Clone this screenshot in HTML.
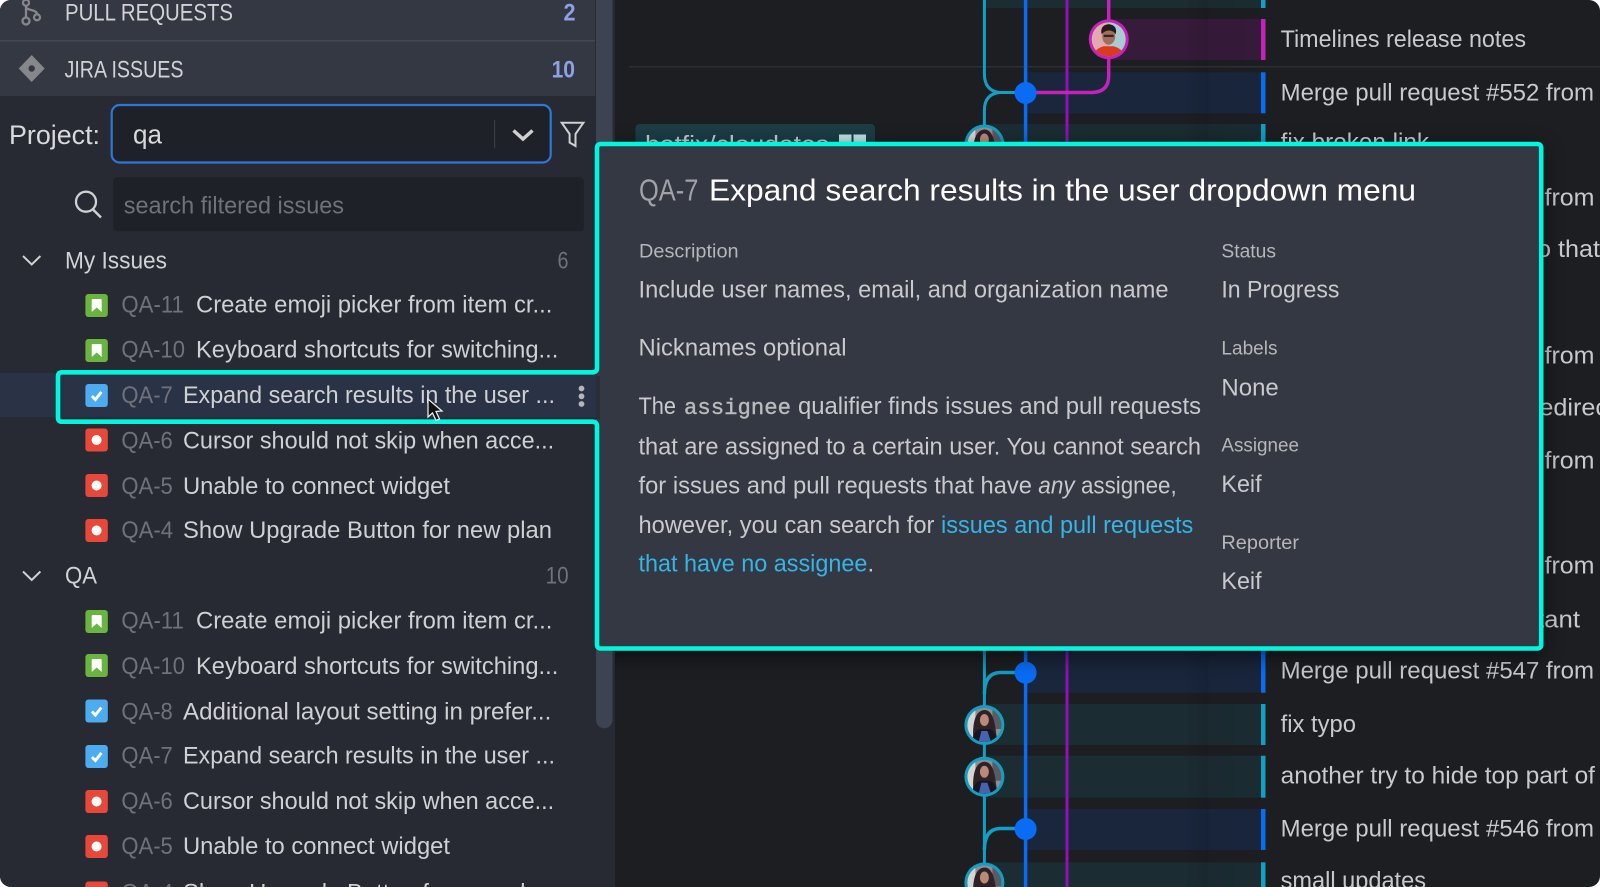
<!DOCTYPE html>
<html><head><meta charset="utf-8"><title>Jira Issues</title>
<style>
html,body{margin:0;padding:0;background:#fff;width:1600px;height:887px;overflow:hidden}
svg{display:block}
text{font-family:"Liberation Sans",sans-serif;white-space:pre}
.h{font-size:24px;fill:#d0d2d5}
.n{font-size:24px;fill:#8ca2e4;font-weight:bold}
.id{font-size:24px;fill:#6f7278}
.t{font-size:24px;fill:#cfd0d3}
.c{font-size:24px;fill:#6f7278}
.m{font-size:24px;fill:#c8c9cb}
.l{font-size:19.500px;fill:#b4b6ba}
.b{font-size:24px;fill:#c8c9cc}
.a{font-size:24px;fill:#35b4e6}
</style></head>
<body>
<svg xmlns="http://www.w3.org/2000/svg" width="1600" height="887" viewBox="0 0 1600 887">
<defs>
<clipPath id="win"><rect x="0" y="0" width="1600" height="887" rx="11"/></clipPath>
<clipPath id="av"><circle cx="0" cy="0" r="17"/></clipPath>
<filter id="blur" x="-10%" y="-20%" width="120%" height="140%"><feGaussianBlur stdDeviation="11"/></filter>
<linearGradient id="shade" x1="0" x2="1" y1="0" y2="0">
<stop offset="0" stop-color="#000" stop-opacity="0"/><stop offset=".33" stop-color="#000" stop-opacity=".1"/><stop offset=".335" stop-color="#000" stop-opacity=".04"/><stop offset="1" stop-color="#000" stop-opacity=".02"/>
</linearGradient>
<g id="ig"><rect width="22.400" height="23" rx="3" fill="#69b53f"/><path d="M6.300 6q0-1 1-1h8q1 0 1 1V18L11.300 13.500 6.300 18Z" fill="#fff"/></g>
<g id="ib"><rect width="22.400" height="23" rx="3" fill="#4dabf0"/><path d="M6.500 12L10 15.500 16 8" fill="none" stroke="#fff" stroke-width="3"/></g>
<g id="ir"><rect width="22.400" height="23" rx="3" fill="#e8483a"/><circle cx="11.200" cy="11.500" r="5" fill="#fff"/></g>
<g id="woman">
<circle r="20" fill="#129fc4"/>
<g clip-path="url(#av)">
<rect x="-18" y="-18" width="36" height="36" fill="#8f8c92"/>
<rect x="-18" y="-18" width="9" height="36" fill="#d8d4d4"/>
<rect x="8" y="-18" width="10" height="22" fill="#5a5a62"/>
<path d="M-11 18C-12 2-11-14 0-15 10-15 11 2 13 18Z" fill="#2e2226"/>
<ellipse cx="0" cy="-5" rx="4.500" ry="6" fill="#b98a78"/>
<path d="M-13 18C-11 8-8 5-4 4L5 4C9 5 12 10 14 18Z" fill="#15161f"/>
<path d="M-6 18L-3 6 3 6 7 18Z" fill="#4663b0"/>
</g></g>
<g id="man">
<circle r="20" fill="#c423b8"/>
<g clip-path="url(#av)">
<rect x="-18" y="-18" width="18" height="36" fill="#e2a9b0"/>
<rect x="0" y="-18" width="18" height="36" fill="#a8cbd4"/>
<ellipse cx="0" cy="-3" rx="6.500" ry="8.500" fill="#a06f5c"/>
<path d="M-7-5C-9-13-3-15 0-15 4-15 9-12 7-5 4-10-3-10-7-5Z" fill="#231c1c"/>
<path d="M-5-4.500h10v2.200h-10Z" fill="#2f2525"/>
<path d="M-16 18C-15 11-9 8-5 7L5 7C9 8 15 11 16 18Z" fill="#d93a20"/>
</g></g>
</defs>
<g clip-path="url(#win)">
<!-- main -->
<rect x="0" y="0" width="1600" height="887" fill="#1c1e22"/>
<rect x="629" y="66" width="971" height="1.500" fill="#2d2f34"/>
<!-- rows -->
<rect x="984" y="0" width="277" height="8" fill="#1b2c32"/><rect x="1261" y="0" width="4.500" height="8" fill="#129fc4"/>
<rect x="1108" y="19" width="153" height="41" fill="#361b3a"/><rect x="1261" y="19" width="4.500" height="41" fill="#c423b8"/>
<rect x="1026" y="72.300" width="235" height="41" fill="#19263c"/><rect x="1261" y="72.300" width="4.500" height="41" fill="#0a6cf5"/>
<rect x="984" y="124" width="277" height="41" fill="#1b2c32"/><rect x="1261" y="124" width="4.500" height="41" fill="#129fc4"/>
<rect x="1026" y="640" width="235" height="52.700" fill="#19263c"/><rect x="1261" y="640" width="4.500" height="52.700" fill="#0a6cf5"/>
<rect x="984" y="704" width="277" height="41" fill="#1b2c32"/><rect x="1261" y="704" width="4.500" height="41" fill="#129fc4"/>
<rect x="984" y="755.700" width="277" height="42" fill="#1b2c32"/><rect x="1261" y="755.700" width="4.500" height="42" fill="#129fc4"/>
<rect x="1026" y="809" width="235" height="41" fill="#19263c"/><rect x="1261" y="809" width="4.500" height="41" fill="#0a6cf5"/>
<rect x="984" y="862.300" width="277" height="25" fill="#1b2c32"/><rect x="1261" y="862.300" width="4.500" height="25" fill="#129fc4"/>
<rect x="1182" y="0" width="79" height="887" fill="url(#shade)"/>
<!-- graph lines -->
<g fill="none">
<path d="M984.400 0V74Q984.400 91 1000 92.500H1026" stroke="#129fc4" stroke-width="3"/>
<path d="M984.400 135V110Q984.400 94 1000 92.500" stroke="#129fc4" stroke-width="3"/>
<path d="M984.400 640V887" stroke="#129fc4" stroke-width="3"/>
<path d="M984.400 694Q984.400 673 1000 672.500H1026" stroke="#129fc4" stroke-width="3.500"/>
<path d="M984.400 850Q984.400 829 1000 828.500H1026" stroke="#129fc4" stroke-width="3.500"/>
<path d="M1025.600 0V887" stroke="#0a6cf5" stroke-width="3.500"/>
<path d="M1067 0V887" stroke="#8e12b4" stroke-width="3"/>
<path d="M1108.700 0V76Q1108.700 92 1092 92.500H1026" stroke="#c423b8" stroke-width="3.500"/>
</g>
<ellipse cx="1025.600" cy="93" rx="11" ry="11" fill="#0a6cf5"/>
<ellipse cx="1025.600" cy="672.700" rx="11" ry="11" fill="#0a6cf5"/>
<ellipse cx="1025.600" cy="829" rx="11" ry="11" fill="#0a6cf5"/>
<use href="#man" x="1108.700" y="39.300"/>
<use href="#woman" x="984.400" y="144.500"/>
<use href="#woman" x="984.400" y="725"/>
<use href="#woman" x="984.400" y="776.700"/>
<use href="#woman" x="984.400" y="882.500"/>
<!-- branch label -->
<rect x="635.500" y="124" width="239.500" height="40" rx="4" fill="#1c3c46"/>
<text x="645" y="152" class="m" style="font-size:23px" textLength="184" lengthAdjust="spacingAndGlyphs">hotfix/cloudates</text>
<rect x="839" y="131.500" width="27" height="16" fill="#bfe2e4"/><rect x="839" y="131.500" width="27" height="3" fill="#1c3c46"/><rect x="851.500" y="134" width="2" height="14" fill="#1c3c46"/>
<!-- commit messages -->
<text x="1280.600" y="47.200" class="m" textLength="245.400" lengthAdjust="spacingAndGlyphs">Timelines release notes</text>
<text x="1280.600" y="100.300" class="m" textLength="313.400" lengthAdjust="spacingAndGlyphs">Merge pull request #552 from</text>
<text x="1280.600" y="150" class="m" textLength="148.400" lengthAdjust="spacingAndGlyphs">fix broken link</text>
<text x="1544.500" y="205.500" class="m" textLength="50" lengthAdjust="spacingAndGlyphs">from</text>
<text x="1530" y="257" class="m" textLength="70" lengthAdjust="spacingAndGlyphs">to that</text>
<text x="1544.500" y="363.500" class="m" textLength="50" lengthAdjust="spacingAndGlyphs">from</text>
<text x="1531" y="415.500" class="m" textLength="84" lengthAdjust="spacingAndGlyphs">redirect</text>
<text x="1544.500" y="468.300" class="m" textLength="50" lengthAdjust="spacingAndGlyphs">from</text>
<text x="1544.500" y="573.500" class="m" textLength="50" lengthAdjust="spacingAndGlyphs">from</text>
<text x="1537" y="627.300" class="m" textLength="43" lengthAdjust="spacingAndGlyphs">tant</text>
<text x="1280.600" y="678.600" class="m" textLength="313.400" lengthAdjust="spacingAndGlyphs">Merge pull request #547 from</text>
<text x="1280.600" y="732" class="m" textLength="75.400" lengthAdjust="spacingAndGlyphs">fix typo</text>
<text x="1280.600" y="783.600" class="m" textLength="314.400" lengthAdjust="spacingAndGlyphs">another try to hide top part of</text>
<text x="1280.600" y="836.500" class="m" textLength="313.400" lengthAdjust="spacingAndGlyphs">Merge pull request #546 from</text>
<text x="1280.600" y="888.500" class="m" textLength="145.400" lengthAdjust="spacingAndGlyphs">small updates</text>
<!-- popup shadow -->
<rect x="598" y="148" width="944" height="508" fill="#000" opacity=".55" filter="url(#blur)"/>
<!-- left panel -->
<rect x="0" y="0" width="615" height="887" fill="#272a33"/>
<rect x="0" y="0" width="595" height="96" fill="#343842"/>
<rect x="0" y="40" width="595" height="1.500" fill="#45484f"/>
<path d="M596 0H612.500V720a8.200 8.200 0 0 1-16.500 0Z" fill="#3d4351"/>
<!-- branch icon -->
<g fill="none" stroke="#85878d" stroke-width="2.300">
<circle cx="26" cy="2.700" r="3"/><circle cx="26" cy="21" r="3.500"/><circle cx="37" cy="17.300" r="3"/>
<path d="M26 6V17.500M26 7C27 11 37 9 37 14.300"/>
</g>
<text x="65" y="20.700" class="h" textLength="168" lengthAdjust="spacingAndGlyphs">PULL REQUESTS</text>
<text x="563.500" y="20.700" class="n" textLength="12" lengthAdjust="spacingAndGlyphs">2</text>
<path d="M31.700 55L44.700 68.500 31.700 82 18.700 68.500Z" fill="#85878d"/><circle cx="31.700" cy="68.500" r="3.200" fill="#343842"/>
<text x="64.500" y="77.300" class="h" textLength="119" lengthAdjust="spacingAndGlyphs">JIRA ISSUES</text>
<text x="551.600" y="77.300" class="n" textLength="23.400" lengthAdjust="spacingAndGlyphs">10</text>
<text x="9" y="144" class="h" style="font-size:26.500px;fill:#d8d9db" textLength="91" lengthAdjust="spacingAndGlyphs">Project:</text>
<rect x="111.700" y="105" width="439" height="57.500" rx="8" fill="#1f2128" stroke="#2a78dc" stroke-width="2.200"/>
<text x="133" y="143.300" class="h" style="font-size:26.500px;fill:#d8d9db" textLength="29" lengthAdjust="spacingAndGlyphs">qa</text>
<rect x="494" y="120" width="1.200" height="28" fill="#3a3c42"/>
<path d="M513.500 130.500L523 139 532.500 130.500" fill="none" stroke="#d0d0d0" stroke-width="3.500"/>
<path d="M561.700 122.700H583.400L575.500 134V146L569.600 142.500V134Z" fill="none" stroke="#cfd0d2" stroke-width="2"/>
<rect x="112.700" y="176.700" width="471.700" height="55" rx="4" fill="#1f2128" stroke="#292b32" stroke-width="1"/>
<circle cx="86" cy="201.700" r="10" fill="none" stroke="#cfd0d2" stroke-width="2.300"/>
<path d="M93 209.500L101 217.500" stroke="#cfd0d2" stroke-width="2.500"/>
<text x="123.800" y="213.300" class="c" textLength="220.200" lengthAdjust="spacingAndGlyphs">search filtered issues</text>
<path d="M23 256L31.700 264.500 40.400 256" fill="none" stroke="#cfd0d2" stroke-width="2"/>
<text x="65" y="268.300" class="h" textLength="102" lengthAdjust="spacingAndGlyphs">My Issues</text>
<text x="557.500" y="268.300" class="c" textLength="11" lengthAdjust="spacingAndGlyphs">6</text>
<path d="M23 571.500L31.700 580 40.400 571.500" fill="none" stroke="#cfd0d2" stroke-width="2"/>
<text x="65" y="583.600" class="h" textLength="32" lengthAdjust="spacingAndGlyphs">QA</text>
<text x="545.600" y="583.600" class="c" textLength="23" lengthAdjust="spacingAndGlyphs">10</text>
<!-- hovered row -->
<rect x="0" y="373" width="596" height="44" fill="#2a3345"/>
<rect x="596" y="374" width="4" height="45" fill="#2b2d36"/>
<!-- My Issues rows -->
<use href="#ig" x="85.400" y="294"/>
<text x="121.400" y="312.300" class="id" textLength="62.500" lengthAdjust="spacingAndGlyphs">QA-11</text>
<text x="196" y="312.300" class="t" textLength="356.400" lengthAdjust="spacingAndGlyphs">Create emoji picker from item cr...</text>
<use href="#ig" x="85.400" y="339"/>
<text x="121.400" y="357.700" class="id" textLength="63.600" lengthAdjust="spacingAndGlyphs">QA-10</text>
<text x="196" y="357.700" class="t" textLength="362.300" lengthAdjust="spacingAndGlyphs">Keyboard shortcuts for switching...</text>
<use href="#ib" x="85.400" y="384"/>
<text x="121.400" y="403" class="id" textLength="51.400" lengthAdjust="spacingAndGlyphs">QA-7</text>
<text x="183" y="403" class="t" textLength="372" lengthAdjust="spacingAndGlyphs">Expand search results in the user ...</text>
<circle cx="581.500" cy="388.500" r="2.900" fill="#b4b6ba"/><circle cx="581.500" cy="396.300" r="2.900" fill="#b4b6ba"/><circle cx="581.500" cy="404" r="2.900" fill="#b4b6ba"/>
<use href="#ir" x="85.400" y="428.500"/>
<text x="121.400" y="448.700" class="id" textLength="51.400" lengthAdjust="spacingAndGlyphs">QA-6</text>
<text x="183" y="448.700" class="t" textLength="371.200" lengthAdjust="spacingAndGlyphs">Cursor should not skip when acce...</text>
<use href="#ir" x="85.400" y="474"/>
<text x="121.400" y="494" class="id" textLength="51.400" lengthAdjust="spacingAndGlyphs">QA-5</text>
<text x="183" y="494" class="t" textLength="267" lengthAdjust="spacingAndGlyphs">Unable to connect widget</text>
<use href="#ir" x="85.400" y="519"/>
<text x="121.400" y="537.800" class="id" textLength="51.600" lengthAdjust="spacingAndGlyphs">QA-4</text>
<text x="183" y="537.800" class="t" textLength="369" lengthAdjust="spacingAndGlyphs">Show Upgrade Button for new plan</text>
<!-- QA rows -->
<use href="#ig" x="85.400" y="610"/>
<text x="121.400" y="628.300" class="id" textLength="62.500" lengthAdjust="spacingAndGlyphs">QA-11</text>
<text x="196" y="628.300" class="t" textLength="356.400" lengthAdjust="spacingAndGlyphs">Create emoji picker from item cr...</text>
<use href="#ig" x="85.400" y="654"/>
<text x="121.400" y="674" class="id" textLength="63.600" lengthAdjust="spacingAndGlyphs">QA-10</text>
<text x="196" y="674" class="t" textLength="362.300" lengthAdjust="spacingAndGlyphs">Keyboard shortcuts for switching...</text>
<use href="#ib" x="85.400" y="699.500"/>
<text x="121.400" y="719.300" class="id" textLength="51.400" lengthAdjust="spacingAndGlyphs">QA-8</text>
<text x="183" y="719.300" class="t" textLength="368.300" lengthAdjust="spacingAndGlyphs">Additional layout setting in prefer...</text>
<use href="#ib" x="85.400" y="745"/>
<text x="121.400" y="763.300" class="id" textLength="51.400" lengthAdjust="spacingAndGlyphs">QA-7</text>
<text x="183" y="763.300" class="t" textLength="372" lengthAdjust="spacingAndGlyphs">Expand search results in the user ...</text>
<use href="#ir" x="85.400" y="790"/>
<text x="121.400" y="809" class="id" textLength="51.400" lengthAdjust="spacingAndGlyphs">QA-6</text>
<text x="183" y="809" class="t" textLength="371.200" lengthAdjust="spacingAndGlyphs">Cursor should not skip when acce...</text>
<use href="#ir" x="85.400" y="835"/>
<text x="121.400" y="854" class="id" textLength="51.400" lengthAdjust="spacingAndGlyphs">QA-5</text>
<text x="183" y="854" class="t" textLength="267" lengthAdjust="spacingAndGlyphs">Unable to connect widget</text>
<use href="#ir" x="85.400" y="881.500"/>
<text x="121.400" y="900.500" class="id" textLength="51.600" lengthAdjust="spacingAndGlyphs">QA-4</text>
<text x="183" y="900.500" class="t" textLength="369" lengthAdjust="spacingAndGlyphs">Show Upgrade Button for new plan</text>
<!-- popup -->
<rect x="597" y="144" width="944" height="504.500" fill="#343842"/>
<path d="M601 144H1537Q1541.200 144 1541.200 148V644.500Q1541.200 648.500 1537 648.500H601Q597 648.500 597 644.500V426Q597 421.700 592.500 421.700H62Q58 421.700 58 417.700V376.500Q58 372.300 62 372.300H592.500Q597 372.300 597 368V148Q597 144 601 144Z" fill="none" stroke="#00f7de" stroke-width="4.600" stroke-linejoin="round"/>
<rect x="597" y="376" width="3" height="43" fill="#2b2d36"/>
<text x="639" y="200.700" style="font-size:30.500px;fill:#a0a2a8" textLength="59.400" lengthAdjust="spacingAndGlyphs">QA-7</text>
<text x="709" y="200.700" style="font-size:30.500px;fill:#fff" textLength="707" lengthAdjust="spacingAndGlyphs">Expand search results in the user dropdown menu</text>
<text x="639" y="257.300" class="l" textLength="99.600" lengthAdjust="spacingAndGlyphs">Description</text>
<text x="1221.400" y="257.300" class="l" textLength="54.600" lengthAdjust="spacingAndGlyphs">Status</text>
<text x="638.500" y="297.300" class="b" textLength="530" lengthAdjust="spacingAndGlyphs">Include user names, email, and organization name</text>
<text x="1221.400" y="297.300" class="b" textLength="118" lengthAdjust="spacingAndGlyphs">In Progress</text>
<text x="638.500" y="355.700" class="b" textLength="208" lengthAdjust="spacingAndGlyphs">Nicknames optional</text>
<text x="1221.400" y="354.500" class="l" textLength="56.100" lengthAdjust="spacingAndGlyphs">Labels</text>
<text x="1221.400" y="395.300" class="b" textLength="57.400" lengthAdjust="spacingAndGlyphs">None</text>
<text x="638.500" y="414" class="b" textLength="37.500" lengthAdjust="spacingAndGlyphs">The</text>
<text x="684" y="414" class="b" style="font-family:'Liberation Mono',monospace;font-size:22px;fill:#b9babd;stroke:#b9babd;stroke-width:.4px" textLength="107" lengthAdjust="spacingAndGlyphs">assignee</text>
<text x="798" y="414" class="b" textLength="403" lengthAdjust="spacingAndGlyphs">qualifier finds issues and pull requests</text>
<text x="638.500" y="454.300" class="b" textLength="562.500" lengthAdjust="spacingAndGlyphs">that are assigned to a certain user. You cannot search</text>
<text x="638.500" y="493.500" class="b" textLength="393.500" lengthAdjust="spacingAndGlyphs">for issues and pull requests that have</text>
<text x="1038.300" y="493.500" class="b" style="font-style:italic" textLength="36.400" lengthAdjust="spacingAndGlyphs">any</text>
<text x="1081" y="493.500" class="b" textLength="95.700" lengthAdjust="spacingAndGlyphs">assignee,</text>
<text x="638.500" y="533" class="b" textLength="295.900" lengthAdjust="spacingAndGlyphs">however, you can search for</text>
<text x="941" y="533" class="a" textLength="252.300" lengthAdjust="spacingAndGlyphs">issues and pull requests</text>
<text x="638.500" y="571.700" class="a" textLength="228.900" lengthAdjust="spacingAndGlyphs">that have no assignee</text>
<text x="867.500" y="571.700" class="b">.</text>
<text x="1221.400" y="451.700" class="l" textLength="77.600" lengthAdjust="spacingAndGlyphs">Assignee</text>
<text x="1221.400" y="492" class="b" textLength="40.200" lengthAdjust="spacingAndGlyphs">Keif</text>
<text x="1221.400" y="548.800" class="l" textLength="77.600" lengthAdjust="spacingAndGlyphs">Reporter</text>
<text x="1221.400" y="589" class="b" textLength="40.200" lengthAdjust="spacingAndGlyphs">Keif</text>
<!-- cursor -->
<path d="M428 399V417L432.500 413 436 420.500 439.500 419 436 411.500 442 411Z" fill="#111" stroke="#e8e8e8" stroke-width="1.300"/>
</g>
</svg>
</body></html>
